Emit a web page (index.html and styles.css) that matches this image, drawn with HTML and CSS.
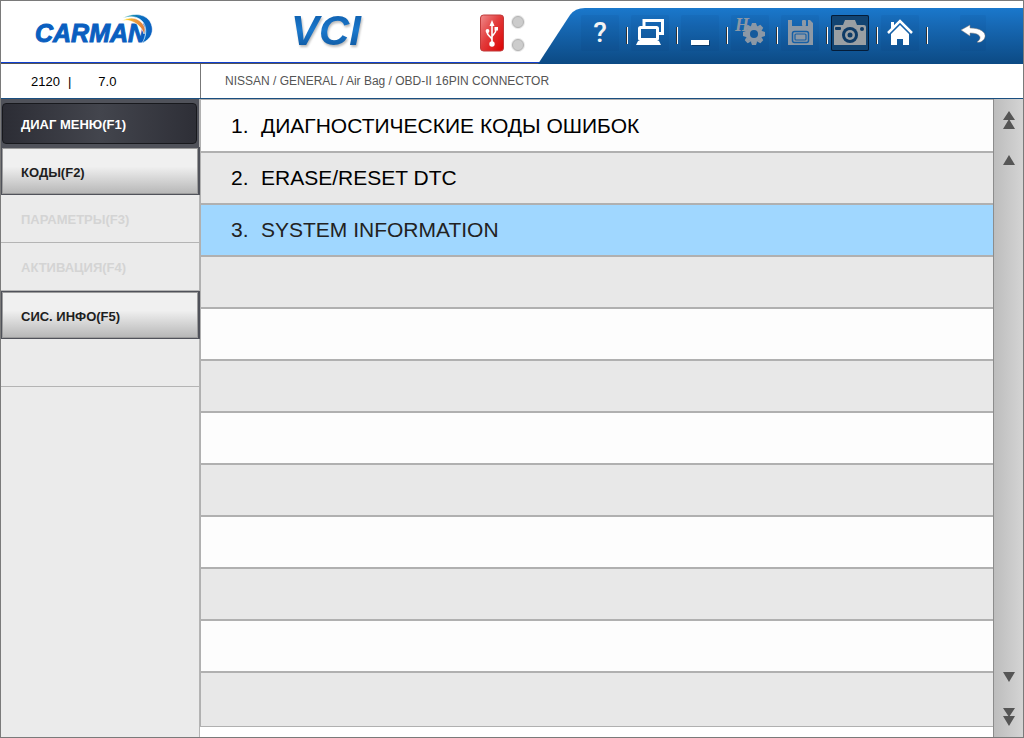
FILE: index.html
```html
<!DOCTYPE html>
<html lang="ru">
<head>
  <meta charset="UTF-8" />
  <meta name="viewport" content="width=device-width, initial-scale=1.0"/>
  <title>CARMAN VCI</title>
  <link rel="stylesheet" href="styles.css">
</head>
<body>
  <header class="topbar">
    <svg class="logo" width="122" height="36" viewBox="0 0 122 36" role="img" aria-label="CARMAN">
      <defs>
        <linearGradient id="arcBlue" x1="0" x2="1"><stop offset="0" stop-color="#1ba79f"/><stop offset="0.6" stop-color="#0a6fc0"/><stop offset="1" stop-color="#0a5fc0"/></linearGradient>
        <linearGradient id="arcSun" x1="0" x2="1"><stop offset="0" stop-color="#ffe800"/><stop offset="0.5" stop-color="#f0a23c"/><stop offset="1" stop-color="#dd7a3c"/></linearGradient>
      </defs>
      <text class="logo-text" x="1" y="30">CARMAN</text>
      <path d="M89 6C97 1 109 1 115 8C121 16 119 27 108 31C113 24 113 14 108 9C103 4 96 4 89 6Z" fill="url(#arcBlue)" stroke="#fff" stroke-width="0.600"/>
      <path d="M88 9C94 5 102 5 107 10C111 14 112 18 110 22C108 16 104 12 99 10C95 8 91 8 88 9Z" fill="url(#arcSun)" stroke="#fff" stroke-width="0.600"/>
    </svg>
    <svg class="vci" width="90" height="44" viewBox="0 0 90 44" role="img" aria-label="VCI">
      <defs>
        <linearGradient id="vciFill" x1="0" y1="0" x2="0" y2="1"><stop offset="0" stop-color="#0b57a4"/><stop offset="0.5" stop-color="#1b78cc"/><stop offset="1" stop-color="#0b4f94"/></linearGradient>
      </defs>
      <text class="vci-text" x="0" y="37" fill="url(#vciFill)">VCI</text>
    </svg>
    <svg class="usb" width="24" height="38" viewBox="0 0 24 38" role="img" aria-label="USB">
      <defs>
        <linearGradient id="usbFill" x1="0" y1="0" x2="1" y2="1"><stop offset="0" stop-color="#f08c8c"/><stop offset="0.45" stop-color="#e23c3c"/><stop offset="1" stop-color="#dc0000"/></linearGradient>
      </defs>
      <rect x="0.5" y="1" width="23" height="36" rx="3" fill="url(#usbFill)" stroke="#c03a3a"/>
      <path d="M12 30V10M12 26C12 22 7 23 7 17M12 23C12 20 16 21 16 15" fill="none" stroke="#fff" stroke-width="1.6"/>
      <path d="M9.500 12L12 6L14.500 12Z" fill="#fff"/>
      <circle cx="12" cy="30" r="2.700" fill="#fff"/>
      <circle cx="7.500" cy="17" r="1.900" fill="#fff"/>
      <rect x="14.500" y="13" width="3.500" height="3.500" fill="#fff"/>
    </svg>
    <div class="leds"><span class="led"></span><span class="led"></span></div>

    <nav class="ribbon">
      <button class="tool help" aria-label="Help">?</button>
      <span class="sep"></span>
      <button class="tool" aria-label="Connection">
        <svg width="38" height="36" viewBox="0 0 38 36" fill="none" stroke="#fff" stroke-width="3">
          <path d="M13 11V5.500H31.500V18.500H27"/>
          <rect x="8.500" y="12.500" width="18" height="12" rx="1"/>
          <path d="M7 26H28L30 30H5Z" fill="#fff" stroke="none"/>
        </svg>
      </button>
      <span class="sep"></span>
      <button class="tool" aria-label="Minimize">
        <svg width="38" height="36" viewBox="0 0 38 36"><rect x="11" y="26" width="18" height="5" fill="#0a3b6c"/><rect x="10" y="25" width="18" height="5" fill="#fff"/></svg>
      </button>
      <span class="sep"></span>
      <button class="tool" aria-label="Hardware settings">
        <svg width="38" height="36" viewBox="0 0 38 36">
          <text class="hw-letter" x="4" y="16">H</text>
          <g fill="#8b98a6">
            <circle cx="23" cy="19" r="8.500"/>
            <path id="tooth" d="M20 11L21 8H25L26 11Z"/>
            <use href="#tooth" transform="rotate(45 23 19)"/><use href="#tooth" transform="rotate(90 23 19)"/>
            <use href="#tooth" transform="rotate(135 23 19)"/><use href="#tooth" transform="rotate(180 23 19)"/>
            <use href="#tooth" transform="rotate(225 23 19)"/><use href="#tooth" transform="rotate(270 23 19)"/>
            <use href="#tooth" transform="rotate(315 23 19)"/>
          </g>
          <circle cx="23" cy="19" r="4" fill="#145a9c"/>
        </svg>
      </button>
      <span class="sep"></span>
      <button class="tool" aria-label="Save">
        <svg width="38" height="36" viewBox="0 0 38 36">
          <path d="M7 5H11V11H27V5H29L32 8V30H7Z" fill="#8d99a6"/>
          <rect x="21" y="5" width="4" height="6" rx="1" fill="#8d99a6"/>
          <rect x="11.500" y="16.500" width="16" height="11" rx="2" fill="none" stroke="#155fa6" stroke-width="1.500"/>
          <rect x="14" y="19" width="11" height="6" rx="1" fill="none" stroke="#155fa6" stroke-width="1.200"/>
        </svg>
      </button>
      <span class="sep"></span>
      <button class="tool active" aria-label="Screenshot">
        <svg width="38" height="36" viewBox="0 0 38 36">
          <path d="M3 12Q3 10 5 10H12L14 5H24L26 10H33Q35 10 35 12V30H3Z" fill="#9a9fa3"/>
          <rect x="4" y="12" width="6" height="3" rx="1" fill="#0f3b66"/>
          <circle cx="19" cy="20" r="8" fill="#0f3b66"/>
          <circle cx="19" cy="20" r="5" fill="#9a9fa3"/>
          <circle cx="19" cy="20" r="2.500" fill="#0f3b66"/>
          <circle cx="31" cy="14" r="2" fill="#0f3b66"/>
        </svg>
      </button>
      <span class="sep"></span>
      <button class="tool" aria-label="Home">
        <svg width="38" height="36" viewBox="0 0 38 36">
          <path d="M10 7H13V11L10 14Z" fill="#fff"/>
          <path d="M7 18L19 6L31 18" fill="none" stroke="#fff" stroke-width="2.500"/>
          <path d="M19 10L28 19V30H22V24H16V30H10V19Z" fill="#fff"/>
        </svg>
      </button>
      <span class="sep"></span>
      <button class="tool back" aria-label="Back">
        <svg width="26" height="36" viewBox="0 0 26 36">
          <path d="M1 15L10 10V13C20 13 26 17 25 22C24 26 20 28 17 27C23 23 20 18 10 18V21Z" fill="#fff" stroke="#8a7f78" stroke-width="0.500"/>
        </svg>
      </button>
    </nav>
  </header>

  <div class="infobar">
    <div class="version"><span>2120</span><span>|</span><span class="release">7.0</span></div>
    <div class="path">NISSAN / GENERAL / Air Bag / OBD-II 16PIN CONNECTOR</div>
  </div>

  <div class="main">
    <nav class="menu">
      <div class="menu-item dark"><button>ДИАГ МЕНЮ(F1)</button></div>
      <div class="menu-item framed"><button>КОДЫ(F2)</button></div>
      <div class="menu-item"><button disabled>ПАРАМЕТРЫ(F3)</button></div>
      <div class="menu-item"><button disabled>АКТИВАЦИЯ(F4)</button></div>
      <div class="menu-item framed"><button>СИС. ИНФО(F5)</button></div>
      <div class="menu-item"></div>
    </nav>

    <ol class="rows">
      <li><button><span class="num">1.</span>ДИАГНОСТИЧЕСКИЕ КОДЫ ОШИБОК</button></li>
      <li><button><span class="num">2.</span>ERASE/RESET DTC</button></li>
      <li class="selected"><button><span class="num">3.</span>SYSTEM INFORMATION</button></li>
      <li></li>
      <li></li>
      <li></li>
      <li></li>
      <li></li>
      <li></li>
      <li></li>
      <li></li>
      <li></li>
    </ol>

    <div class="scroll">
      <button aria-label="First page"><svg width="14" height="20" viewBox="0 0 14 20"><path d="M7 1L13 10H1ZM7 9L13 19H1Z"/></svg></button>
      <button aria-label="Page up"><svg width="14" height="12" viewBox="0 0 14 12"><path d="M7 1L13 11H1Z"/></svg></button>
      <button class="down" aria-label="Page down"><svg width="14" height="12" viewBox="0 0 14 12"><path d="M1 1H13L7 11Z"/></svg></button>
      <button aria-label="Last page"><svg width="14" height="20" viewBox="0 0 14 20"><path d="M1 1H13L7 10ZM1 9H13L7 19Z"/></svg></button>
    </div>
  </div>
</body>
</html>
```
FILE: styles.css
```css
* { box-sizing: border-box; margin: 0; padding: 0; }
body { min-height: 100vh; display: flex; flex-direction: column; border: 1px solid #7a7a7a; background: #fff; font-family: "Liberation Sans", Arial, sans-serif; color: #000; }
button { background: none; border: none; font: inherit; color: inherit; text-align: left; cursor: pointer; }
svg { display: block; overflow: visible; }

/* top bar */
.topbar { display: flex; height: 63px; box-shadow: inset 0 -1px #555, inset 0 -2px #1040d0; }
.logo { margin: 11px 0 0 33px; }
.logo-text { font-size: 25px; font-weight: bold; font-style: italic; fill: #0a5fc0; stroke: #0a5fc0; stroke-width: 1px; }
.vci { margin: 7px 0 0 135px; filter: drop-shadow(1px 2px 1px #bbb); }
.vci-text { font-size: 42px; font-weight: bold; font-style: italic; }
.usb { margin: 13px 0 0 99px; }
.leds { display: flex; flex-direction: column; gap: 11px; margin: 15px 0 0 8px; }
.led { width: 12px; height: 12px; border-radius: 50%; background: #ccc; border: 1px solid #b4b4b4; box-shadow: 0 0 0 1px #e8e8e8; }

.ribbon { display: flex; align-items: flex-start; align-self: flex-end; height: 56px; margin-left: auto; padding: 7px 37px 0 43px; background: linear-gradient(#1a78cc, #1769b5 30%, #0c4a84); clip-path: path("M0 56L32 7Q37 0 47 0H3000V56Z"); }
.tool { width: 38px; height: 36px; border-radius: 2px; background: rgba(0,40,90,0.06); }
.tool.help { text-align: center; font-family: Roboto, sans-serif; font-size: 28px; font-weight: 500; line-height: 36px; color: #f4f4f4; }
.tool.active { background: #124472; box-shadow: inset 0 0 0 1px #041c38; }
.tool.back { width: 26px; margin-left: 29px; }
.sep { width: 2px; height: 17px; margin: 12px 3px 0 7px; background: #fff; border-left: 1px solid #333; }
.hw-letter { font: italic bold 18px "Liberation Serif", serif; fill: #8b98a6; }

/* version and path */
.infobar { display: flex; height: 35px; border-bottom: 1px solid #1a4f80; font-size: 13px; line-height: 36px; }
.version { display: flex; gap: 8px; width: 200px; padding-left: 30px; border-right: 1px solid #777; }
.release { margin-left: 19px; }
.path { padding-left: 24px; font-size: 12px; line-height: 34px; color: #555; white-space: nowrap; }

.main { flex: 1; display: flex; }

/* left menu */
.menu { width: 199px; background: #ebebeb; border-right: 1px solid #b4b4b4; font-size: 13px; font-weight: bold; }
.menu-item { height: 48px; border-bottom: 1px solid #b4b4b4; }
.menu-item button { width: 100%; height: 100%; padding: 2px 0 0 20px; color: #1e1e1e; }
.menu-item button:disabled { color: #d4d4d4; }
.menu-item.dark { padding: 4px 2px 3px 1px; border: none; background: #50525a; }
.menu-item.dark button { padding-left: 18px; border-radius: 4px; border: 1px solid #18191d; background: linear-gradient(90deg, #2c2d35, #43454d 50%, #2e2f37); color: #fff; }
.menu-item.framed { width: 199px; border: 1px solid #50525a; border-width: 1px 2px 1px 1px; }
.menu-item.framed button { padding-left: 18px; border: 1px solid #9c9c9c; background: linear-gradient(#f0f0f0 40%, #b8b8b8); }

/* list */
.rows { flex: 1; display: flex; flex-direction: column; margin-bottom: 10px; padding-top: 1px; list-style: none; font-size: 21px; background: #b0b0b0; border-left: 1px solid #b0b0b0; }
.rows li { height: 52px; border-bottom: 2px solid #b0b0b0; background: #fdfdfd; }
.rows li:first-child { height: 53px; }
.rows li:nth-child(even) { background: #e8e8e8; }
.rows li:last-child { flex: 1; min-height: 52px; border-bottom-width: 1px; }
.rows li.selected { background: #a0d7ff; color: #222; }
.rows button { display: flex; align-items: center; width: 100%; height: 100%; padding-left: 30px; }
.num { width: 30px; }

/* paging arrows */
.scroll { display: flex; flex-direction: column; align-items: center; gap: 24px; width: 30px; padding: 11px 0 10px; background: linear-gradient(90deg, #bdbdbd, #d4d4d4); border-left: 1px solid #8c8c8c; }
.scroll svg { fill: #555; }
.scroll .down { margin-top: auto; }
```
